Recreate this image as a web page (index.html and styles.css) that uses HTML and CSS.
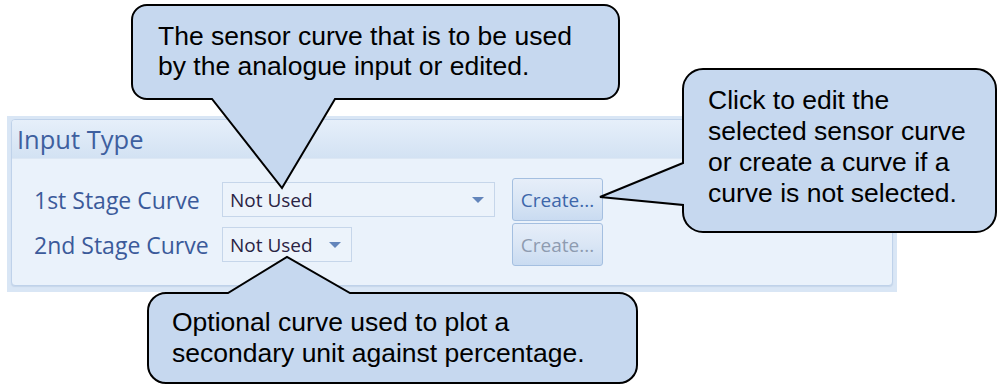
FILE: index.html
```html
<!DOCTYPE html>
<html lang="en">
<head>
    <meta charset="UTF-8">
    <title>Input Type</title>
    <link rel="stylesheet" href="styles.css">
</head>
<body>
    <div class="page">
        <div class="frame">
            <section class="panel">
                <div class="panel-head">Input Type</div>
                <div class="panel-body">
                    <span class="label">1st Stage Curve</span>
                    <div class="combo combo-wide"><span>Not Used</span><i class="caret"></i></div>
                    <button class="btn">Create...</button>

                    <span class="label">2nd Stage Curve</span>
                    <div class="combo combo-short"><span>Not Used</span><i class="caret"></i></div>
                    <button class="btn" disabled>Create...</button>
                </div>
            </section>
        </div>

        <!-- callouts lie over the panel -->
        <div class="callout callout-top">
            <svg class="balloon" width="489" height="96">
                <path d="M16 1 H473 A15 15 0 0 1 488 16 V80 A15 15 0 0 1 473 95 H204 L151 184 L81 95 H16 A15 15 0 0 1 1 80 V16 A15 15 0 0 1 16 1 Z"/>
            </svg>
            <p>The sensor curve that is to be used<br>by the analogue input or edited.</p>
        </div>

        <div class="callout callout-right">
            <svg class="balloon" width="315" height="165">
                <path d="M21 1 H294 A20 20 0 0 1 314 21 V144 A20 20 0 0 1 294 164 H21 A20 20 0 0 1 1 144 V137 L-82 129 L1 95 V21 A20 20 0 0 1 21 1 Z"/>
            </svg>
            <p>Click to edit the<br>selected sensor curve<br>or create a curve if a<br>curve is not selected.</p>
        </div>

        <div class="callout callout-bottom">
            <svg class="balloon" width="491" height="92">
                <path d="M19 1 H81 L140 -35 L203 1 H472 A18 18 0 0 1 490 19 V73 A18 18 0 0 1 472 91 H19 A18 18 0 0 1 1 73 V19 A18 18 0 0 1 19 1 Z"/>
            </svg>
            <p>Optional curve used to plot a<br>secondary unit against percentage.</p>
        </div>
    </div>
</body>
</html>
```

FILE: styles.css
```css
body {
    margin: 0;
    background: #ffffff;
    font-family: "Open Sans", "Noto Sans", sans-serif;
}
.page {
    position: relative;
    width: 1000px;
    height: 385px;
    overflow: hidden;
}
.frame {
    width: 882px;
    margin: 116px 0 0 7px;
    padding: 3px 4px 6px 4px;
    background: #d9e6f5;
}
.panel {
    border: 1px solid #bfd2ea;
    border-radius: 4px;
    background: #eaf2fb;
    box-shadow: 0 1px 1px #c6d6ea;
}
.panel-head {
    height: 38px;
    line-height: 38px;
    padding-left: 5px;
    font-size: 25.5px;
    color: #3e5f9f;
    background: linear-gradient(#e6effa, #d3e2f3);
    border-bottom: 1px solid #dce7f4;
    border-radius: 3px 3px 0 0;
}
.panel-body {
    display: grid;
    grid-template-columns: 188px 290px 91px;
    grid-auto-rows: 43px;
    row-gap: 2px;
    align-items: center;
    padding: 19px 0 19px 22px;
}
.label {
    font-size: 23px;
    color: #3b5a9a;
}
.combo {
    height: 35px;
    box-sizing: border-box;
    border: 1px solid #c6d6ea;
    background: #ecf3fb;
    display: flex;
    align-items: center;
    justify-content: space-between;
    padding: 0 10px 0 7px;
    font-size: 19px;
    color: #2a2344;
}
.combo-wide {
    width: 273px;
}
.combo-short {
    width: 130px;
}
.caret {
    width: 0;
    height: 0;
    border-left: 6px solid transparent;
    border-right: 6px solid transparent;
    border-top: 6px solid #6385bb;
}
.btn {
    width: 91px;
    height: 43px;
    border: 1px solid #a4bfe0;
    border-radius: 3px;
    background: linear-gradient(#e6eef9, #dae6f5 50%, #c9dbf1);
    font-family: "Open Sans", "Noto Sans", sans-serif;
    font-size: 19px;
    color: #3d66aa;
    padding: 0;
}
.btn:disabled {
    color: #8e9bb0;
}
.callout {
    position: absolute;
    font-family: "Liberation Sans", Arial, sans-serif;
    font-size: 26.5px;
    color: #000000;
}
.callout p {
    position: relative;
    margin: 0;
}
.balloon {
    position: absolute;
    left: 0;
    top: 0;
    overflow: visible;
}
.balloon path {
    fill: #c6d8ef;
    stroke: #000000;
    stroke-width: 2;
    stroke-linejoin: miter;
}
.callout-top {
    left: 131px;
    top: 4px;
    width: 489px;
    height: 96px;
}
.callout-top p {
    padding: 17px 0 0 27px;
    line-height: 30px;
}
.callout-right {
    left: 682px;
    top: 68px;
    width: 315px;
    height: 165px;
}
.callout-right p {
    padding: 17px 0 0 26px;
    line-height: 31px;
}
.callout-bottom {
    left: 147px;
    top: 292px;
    width: 491px;
    height: 92px;
}
.callout-bottom p {
    padding: 15px 0 0 25px;
    line-height: 31px;
}
```
